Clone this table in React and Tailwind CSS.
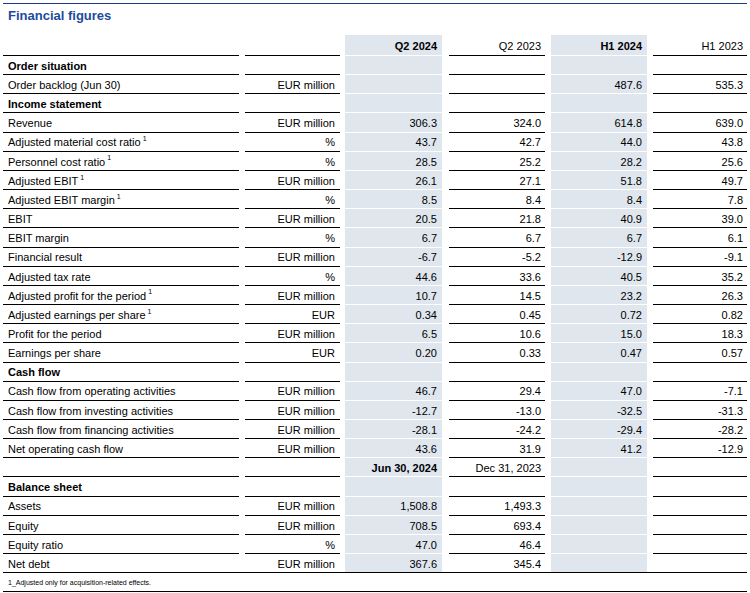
import React from 'react'

const rows = [
  { section: 'Order situation' },
  { label: 'Order backlog (Jun 30)', unit: 'EUR million', v: ['', '', '487.6', '535.3'] },
  { section: 'Income statement' },
  { label: 'Revenue', unit: 'EUR million', v: ['306.3', '324.0', '614.8', '639.0'] },
  { label: 'Adjusted material cost ratio', fn: true, unit: '%', v: ['43.7', '42.7', '44.0', '43.8'] },
  { label: 'Personnel cost ratio', fn: true, unit: '%', v: ['28.5', '25.2', '28.2', '25.6'] },
  { label: 'Adjusted EBIT', fn: true, unit: 'EUR million', v: ['26.1', '27.1', '51.8', '49.7'] },
  { label: 'Adjusted EBIT margin', fn: true, unit: '%', v: ['8.5', '8.4', '8.4', '7.8'] },
  { label: 'EBIT', unit: 'EUR million', v: ['20.5', '21.8', '40.9', '39.0'] },
  { label: 'EBIT margin', unit: '%', v: ['6.7', '6.7', '6.7', '6.1'] },
  { label: 'Financial result', unit: 'EUR million', v: ['-6.7', '-5.2', '-12.9', '-9.1'] },
  { label: 'Adjusted tax rate', unit: '%', v: ['44.6', '33.6', '40.5', '35.2'] },
  { label: 'Adjusted profit for the period', fn: true, unit: 'EUR million', v: ['10.7', '14.5', '23.2', '26.3'] },
  { label: 'Adjusted earnings per share', fn: true, unit: 'EUR', v: ['0.34', '0.45', '0.72', '0.82'] },
  { label: 'Profit for the period', unit: 'EUR million', v: ['6.5', '10.6', '15.0', '18.3'] },
  { label: 'Earnings per share', unit: 'EUR', v: ['0.20', '0.33', '0.47', '0.57'] },
  { section: 'Cash flow' },
  { label: 'Cash flow from operating activities', unit: 'EUR million', v: ['46.7', '29.4', '47.0', '-7.1'] },
  { label: 'Cash flow from investing activities', unit: 'EUR million', v: ['-12.7', '-13.0', '-32.5', '-31.3'] },
  { label: 'Cash flow from financing activities', unit: 'EUR million', v: ['-28.1', '-24.2', '-29.4', '-28.2'] },
  { label: 'Net operating cash flow', unit: 'EUR million', v: ['43.6', '31.9', '41.2', '-12.9'] },
  { label: '', unit: '', v: ['Jun 30, 2024', 'Dec 31, 2023', '', ''], dates: true },
  { section: 'Balance sheet' },
  { label: 'Assets', unit: 'EUR million', v: ['1,508.8', '1,493.3', '', ''] },
  { label: 'Equity', unit: 'EUR million', v: ['708.5', '693.4', '', ''] },
  { label: 'Equity ratio', unit: '%', v: ['47.0', '46.4', '', ''] },
  { label: 'Net debt', unit: 'EUR million', v: ['367.6', '345.4', '', ''], last: true },
]

function Row({ row, header }) {
  const last = row.last
  const line = last ? '' : 'border-b border-black'
  const shade = last ? 'bg-[#dfe6ee]' : 'bg-[#dfe6ee] border-b border-white'
  const v = row.v || ['', '', '', '']

  return (
    <div className={`flex ${header ? 'h-[21px]' : 'h-[19.17px]'} ${last ? 'border-b border-black' : ''}`}>
      <div className={`w-[236px] pl-[5px] pt-[2px] flex items-center ${line} ${row.section ? 'font-bold' : ''}`}>
        {row.section || row.label}
        {row.fn && <sup className="text-[7px] ml-[2px]">1</sup>}
      </div>
      <div className={`ml-[6px] w-[95px] pr-[5px] pt-[2px] flex items-center justify-end ${line}`}>{row.unit}</div>
      <div className={`ml-[5px] w-[97px] pr-[5px] pt-[2px] flex items-center justify-end ${shade} ${header || row.dates ? 'font-bold' : ''}`}>{v[0]}</div>
      <div className={`ml-[7px] w-[96px] pr-[4px] pt-[2px] flex items-center justify-end ${line}`}>{v[1]}</div>
      <div className={`ml-[6px] w-[96px] pr-[5px] pt-[2px] flex items-center justify-end ${shade} ${header ? 'font-bold' : ''}`}>{v[2]}</div>
      <div className={`ml-[6px] w-[94px] pr-[4px] pt-[2px] flex items-center justify-end ${line}`}>{v[3]}</div>
    </div>
  )
}

export default function App() {
  return (
    <div className="w-[750px] h-[593px] bg-white pl-[3px] font-['Liberation_Sans',Arial,sans-serif] text-[11px] text-black">
      <div className="w-[744px]">
        <div className="mt-[3px] h-px bg-[#1b3a87]" />
        <div className="h-[31px] pl-[5px] leading-[24px] text-[13px] font-bold text-[#1d4b9b]">Financial figures</div>

        <Row header row={{ label: '', unit: '', v: ['Q2 2024', 'Q2 2023', 'H1 2024', 'H1 2023'] }} />
        {rows.map((r, i) => (
          <Row key={i} row={r} />
        ))}

        <div className="h-[19px] pl-[5px] pt-[2px] flex items-center text-[7px] border-b border-black">
          1_Adjusted only for acquisition-related effects.
        </div>
      </div>
    </div>
  )
}
